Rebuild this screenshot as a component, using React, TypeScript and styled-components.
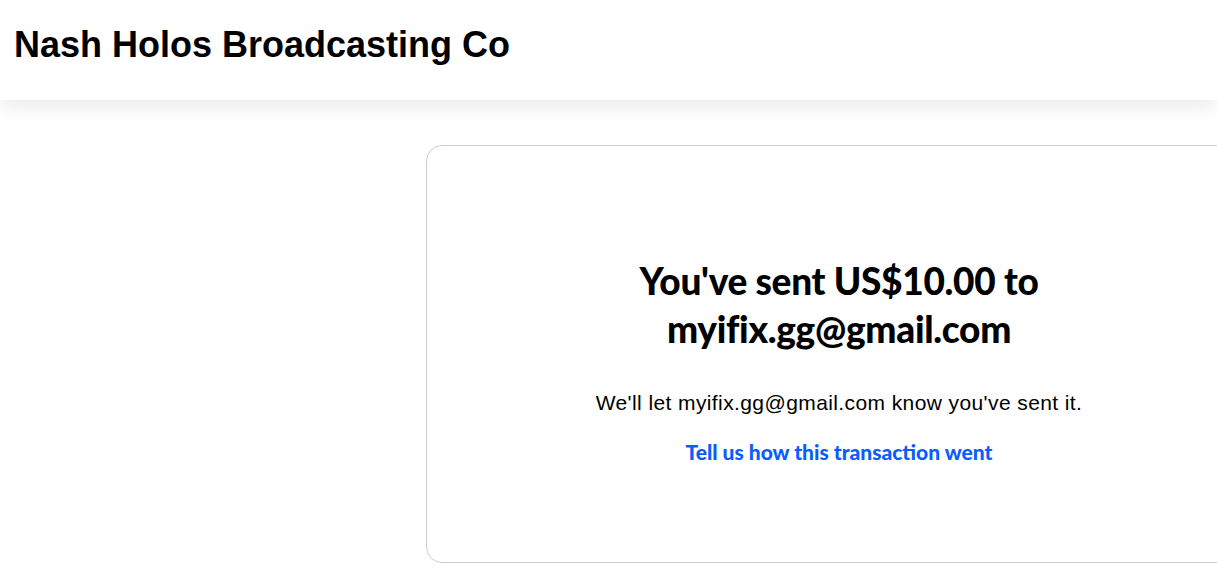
import React from "react";
import styled, { createGlobalStyle } from "styled-components";

const Global = createGlobalStyle`
  html, body { margin: 0; padding: 0; background: #ffffff; }
  body { font-family: "Liberation Sans", Arial, sans-serif; color: #000; overflow: hidden; }
  * { box-sizing: border-box; }
`;

const Page = styled.div`
  width: 1217px;
  height: 579px;
  overflow: hidden;
  display: flex;
  flex-direction: column;
`;

const Header = styled.header`
  height: 100px;
  display: flex;
  align-items: center;
  padding: 0 14px 10px;
  background: #fff;
  box-shadow: 0 6px 20px rgba(0, 0, 0, 0.09);
  position: relative;
  z-index: 1;
`;

const Brand = styled.h1`
  margin: 0;
  font-family: "Liberation Sans", Arial, sans-serif;
  font-weight: 700;
  font-size: 36px;
  line-height: 1;
  letter-spacing: 0;
`;

const Main = styled.main`
  flex: 1;
  display: flex;
  padding: 45px 0 0 426px;
`;

const Card = styled.section`
  flex: 0 0 826px;
  height: 418px;
  border: 1px solid #cfcfcf;
  border-radius: 16px;
  display: flex;
  flex-direction: column;
  align-items: center;
  padding-top: 111px;
`;

const Title = styled.h2`
  margin: 0;
  width: 460px;
  text-align: center;
  font-family: Lato, "Noto Sans", sans-serif;
  font-weight: 900;
  font-size: 37px;
  line-height: 48px;
  letter-spacing: -0.3px;
`;

const Note = styled.p`
  margin: 38px 0 0;
  font-family: "Liberation Sans", Arial, sans-serif;
  font-size: 21px;
  line-height: 24px;
  letter-spacing: 0.4px;
`;

const FeedbackLink = styled.a`
  margin-top: 24px;
  font-family: Lato, "Noto Sans", sans-serif;
  font-weight: 900;
  font-size: 21px;
  line-height: 26px;
  color: #0b5cff;
  text-decoration: none;
  letter-spacing: 0;
`;

export default function App() {
  return (
    <>
      <Global />
      <Page>
        <Header>
          <Brand>Nash Holos Broadcasting Co</Brand>
        </Header>
        <Main>
          <Card>
            <Title>You've sent US$10.00 to myifix.gg@gmail.com</Title>
            <Note>We'll let myifix.gg@gmail.com know you've sent it.</Note>
            <FeedbackLink href="#">Tell us how this transaction went</FeedbackLink>
          </Card>
        </Main>
      </Page>
    </>
  );
}
